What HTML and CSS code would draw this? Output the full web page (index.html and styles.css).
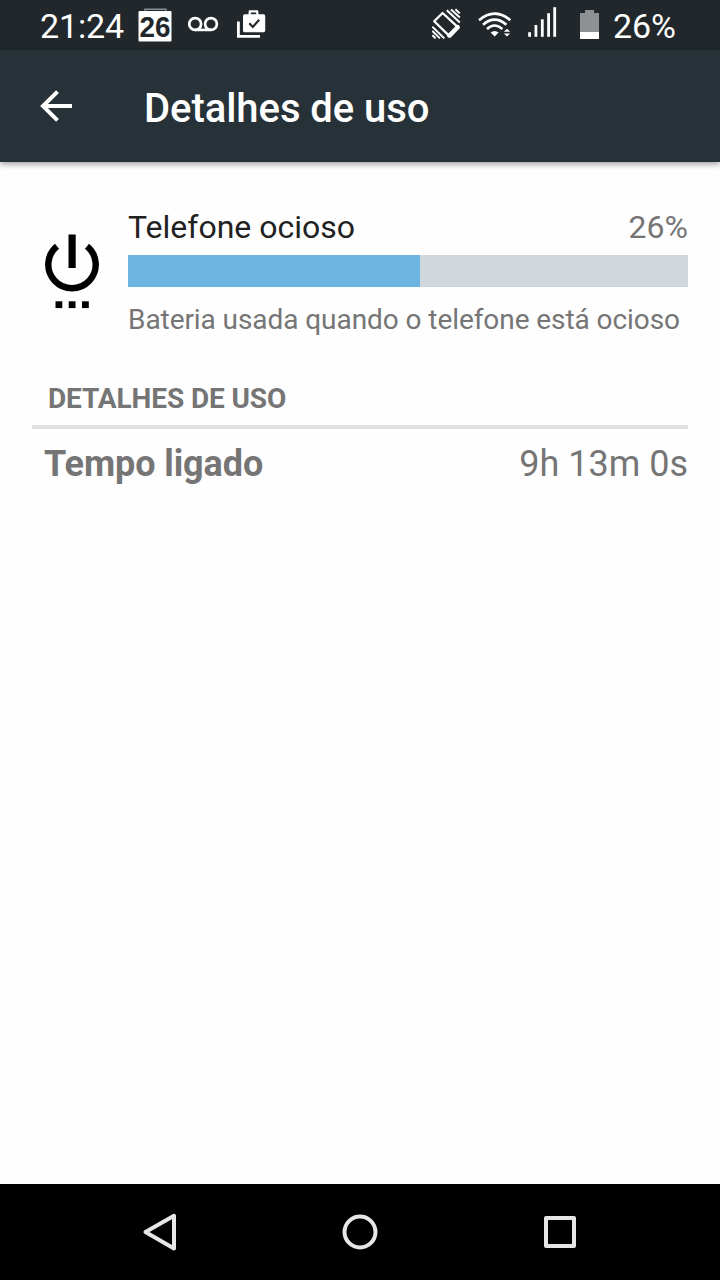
FILE: index.html
```
<!DOCTYPE html>
<html lang="pt-BR">
<head>
    <meta charset="UTF-8">
    <meta name="viewport" content="width=device-width, initial-scale=1.0">
    <title>Detalhes de uso</title>
    <link rel="stylesheet" href="styles.css">
</head>
<body>

    <div class="status-bar">
        <span class="clock">21:24</span>
        <div class="notifications">
            <svg class="icon-calendar" width="34" height="50" viewBox="0 0 34 50">
                <path d="M7 11V9.2h21V11" fill="none" stroke="#8b9093" stroke-width="1.4"/>
                <rect x="0.5" y="11" width="33" height="30.5" rx="1" fill="#fff"/>
                <text x="17" y="36.8" class="calendar-day" textLength="31" lengthAdjust="spacingAndGlyphs">26</text>
            </svg>
            <svg class="icon-voicemail" width="32" height="50" viewBox="0 0 32 50" fill="none" stroke="#fff" stroke-width="2.7">
                <circle cx="7.2" cy="24" r="5.9"/>
                <circle cx="23" cy="24" r="5.9"/>
                <path d="M7.2 29.9H23"/>
            </svg>
            <svg class="icon-bag" width="30" height="50" viewBox="0 0 30 50">
                <path d="M1.4 21.5v14.8H23" fill="none" stroke="#fff" stroke-width="2.8"/>
                <path d="M12.7 15v-3.6h7.6V15" fill="none" stroke="#fff" stroke-width="2.2" stroke-linejoin="round"/>
                <rect x="6" y="14.3" width="22.2" height="17.9" rx="1.6" fill="#fff"/>
                <path d="M12.3 23.3l3.5 3.6 6.4-7.2" fill="none" stroke="#21272b" stroke-width="2.2"/>
            </svg>
        </div>
        <div class="system-icons">
            <svg class="icon-rotate" width="30" height="50" viewBox="0 0 30 50" fill="none" stroke="#fff">
                <path d="M10.6 13L2.2 21.2 18 36.6l8.6-8.8z" stroke-width="2.3" stroke-linejoin="round"/>
                <path d="M17 35.6l8.8-8.8" stroke-width="4" stroke-linecap="round"/>
                <path d="M14.8 10.2l13 12.2M19 9.4l8.8 8.2M23.4 9.2l4.4 4.2M.3 26.6l12 11.8M.3 30.9l7.6 7.5M.3 35.2l3.3 3.2" stroke-width="2"/>
            </svg>
            <svg class="icon-wifi" width="34" height="50" viewBox="0 0 34 50" fill="none" stroke="#fff" stroke-width="2.6">
                <path d="M1 20.2Q16.5 7.2 32.3 20.2"/>
                <path d="M5 24.8Q16.5 14.6 28.4 24.8"/>
                <path d="M9 29Q16.5 22 24.4 29"/>
                <path d="M12.6 32.6q4-3.4 8 0l-4 4z" fill="#fff" stroke="none"/>
                <path d="M25.8 31.7l3.2-3 3.2 3zM25.8 33.4l3.2 3 3.2-3z" fill="#fff" stroke="none"/>
            </svg>
            <svg class="icon-signal" width="30" height="50" viewBox="0 0 30 50" fill="#fff">
                <rect x="0.2" y="32.2" width="2.8" height="4.6"/>
                <rect x="6.5" y="25" width="2.8" height="11.8"/>
                <rect x="12.9" y="19.3" width="2.8" height="17.5"/>
                <rect x="19.2" y="13.2" width="2.8" height="23.6"/>
                <rect x="25.3" y="7.2" width="2.8" height="29.6"/>
            </svg>
            <svg class="icon-battery" width="20" height="50" viewBox="0 0 20 50">
                <path d="M0 13h5v-3h9v3h5v19H0z" fill="#8d9193"/>
                <rect y="32" width="19" height="7" fill="#fff"/>
            </svg>
            <span class="battery-level">26%</span>
        </div>
    </div>

    <header class="app-bar">
        <svg class="back" width="34" height="34" viewBox="0 0 34 34" fill="none" stroke="#fff" stroke-width="4">
            <path d="M32 17H3M17.5 2.6L3 17l14.5 14.4"/>
        </svg>
        <h1>Detalhes de uso</h1>
    </header>

    <main class="content">
        <section class="usage">
            <svg class="power" width="56" height="76" viewBox="0 0 56 76">
                <path d="M13 12.2A23.7 23.7 0 1 0 43 12.2" fill="none" stroke="#000" stroke-width="6.4"/>
                <rect x="24.5" y="0.5" width="7.2" height="33.5"/>
                <rect x="11.5" y="67.3" width="6.8" height="6.8"/>
                <rect x="24.7" y="67.3" width="6.8" height="6.8"/>
                <rect x="38" y="67.3" width="6.8" height="6.8"/>
            </svg>
            <div class="usage-info">
                <div class="usage-title">
                    <span>Telefone ocioso</span>
                    <span class="percent">26%</span>
                </div>
                <div class="progress"><div class="progress-fill"></div></div>
                <p class="summary">Bateria usada quando o telefone está ocioso</p>
            </div>
        </section>

        <h2>Detalhes de uso</h2>
        <div class="detail-row">
            <span class="label">Tempo ligado</span>
            <span>9h 13m 0s</span>
        </div>
    </main>

    <nav class="nav-bar">
        <svg width="40" height="40" viewBox="0 0 40 40">
            <path d="M5.5 20L34 3.8v32.6z"/>
        </svg>
        <svg width="40" height="40" viewBox="0 0 40 40">
            <circle cx="20" cy="20" r="15.5"/>
        </svg>
        <svg width="40" height="40" viewBox="0 0 40 40">
            <rect x="6" y="6" width="28" height="28"/>
        </svg>
    </nav>

</body>
</html>
```
FILE: styles.css
```
/* Reset and base styles */
* {
    margin: 0;
    padding: 0;
    box-sizing: border-box;
}

body {
    display: flex;
    flex-direction: column;
    height: 1280px;
    font-family: Roboto, "Liberation Sans", sans-serif;
    background: #fefefe;
    color: #757575;
}

svg {
    display: block;
    flex-shrink: 0;
}

/* Status bar */
.status-bar {
    display: flex;
    height: 50px;
    padding: 0 44px 0 40px;
    background: #21272b;
    color: #fff;
    font-size: 34px;
    line-height: 53px;
}

.clock {
    width: 98px;
    letter-spacing: -0.15px;
}

.notifications,
.system-icons {
    display: flex;
}

.system-icons {
    margin-left: auto;
}

.icon-calendar {
    overflow: visible;
}

.calendar-day {
    font: bold 30px "Liberation Sans", sans-serif;
    text-anchor: middle;
    fill: #21272b;
}

.icon-voicemail {
    margin: 0 17px 0 16px;
}

.icon-wifi {
    margin: 0 16px;
}

.icon-battery {
    margin: 0 13px 0 22px;
}

/* App bar */
.app-bar {
    display: flex;
    align-items: center;
    height: 112px;
    padding-left: 40px;
    background: #263238;
    color: #fff;
    box-shadow: 0 2px 6px rgba(0, 0, 0, 0.4);
}

.app-bar h1 {
    margin: 4px 0 0 70px;
    font-size: 40px;
    font-weight: 500;
    letter-spacing: -0.05px;
}

/* Content */
.content {
    flex: 1;
    padding: 46px 32px 0;
}

.usage {
    display: flex;
}

.power {
    margin: 26px 28px 0 12px;
}

.usage-info {
    flex: 1;
}

.usage-title {
    display: flex;
    justify-content: space-between;
    height: 47px;
    font-size: 32px;
    line-height: 38px;
    color: #212121;
}

.usage-title .percent {
    color: #757575;
}

.progress {
    height: 32px;
    background: #cfd6dc;
}

.progress-fill {
    width: 292px;
    height: 32px;
    background: #6db5e1;
}

.summary {
    margin-top: 16px;
    font-size: 28px;
    line-height: 33px;
    letter-spacing: -0.07px;
    white-space: nowrap;
}

h2 {
    height: 61px;
    margin-top: 32px;
    padding: 14px 16px 0;
    border-bottom: 4px solid #e0e0e0;
    font-size: 28px;
    line-height: 33px;
    letter-spacing: -0.1px;
    text-transform: uppercase;
}

.detail-row {
    display: flex;
    justify-content: space-between;
    padding: 14px 0 0 12px;
    font-size: 36px;
    line-height: 42px;
}

.detail-row .label {
    font-weight: bold;
    letter-spacing: -0.1px;
}

/* Navigation bar */
.nav-bar {
    display: flex;
    justify-content: space-between;
    align-items: center;
    height: 96px;
    padding: 0 140px;
    background: #000;
}

.nav-bar svg {
    fill: none;
    stroke: #e6e6e6;
    stroke-width: 4;
    stroke-linejoin: round;
}
```
